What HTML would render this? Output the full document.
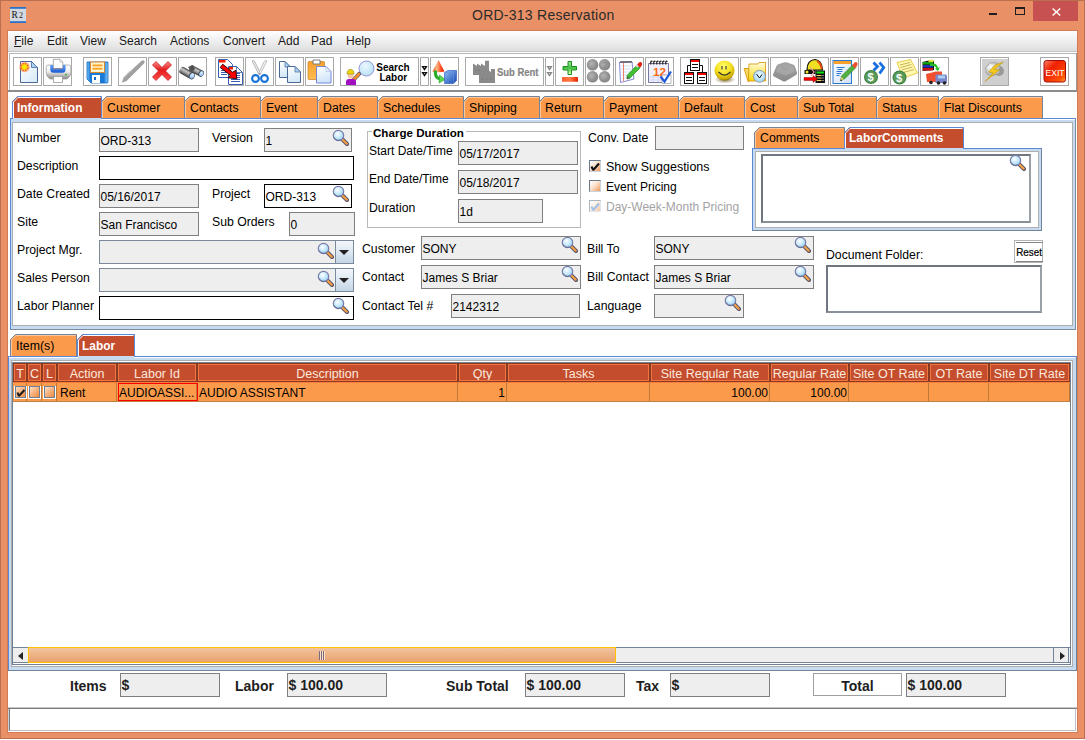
<!DOCTYPE html>
<html><head><meta charset="utf-8"><style>
*{margin:0;padding:0;box-sizing:border-box}
html,body{width:1085px;height:740px;overflow:hidden;background:#fff;font-family:"Liberation Sans",sans-serif;font-size:12px;color:#000}
.a{position:absolute}
.t{position:absolute;white-space:nowrap;line-height:14px;font-size:12.25px}
.b{font-weight:bold}
.fld{position:absolute;height:24px;border:1px solid #7f7f7f;background:#eeeeee;white-space:nowrap;padding-left:0.5px;line-height:14px;padding-top:5px;overflow:hidden}
.fw{background:#fff;border-color:#000}
.tab{position:absolute;border:1px solid #7F9BC8;border-bottom:none;padding-left:5px;white-space:nowrap;background:#FA9A4A;font-size:12.5px;line-height:14px}
.tab.sel{background:#C44D2E;color:#fff;font-weight:bold}
.tb{position:absolute;top:57px;height:29px;border:1px solid #a9a9a9;background:#fff;overflow:hidden}
.th{position:absolute;top:363px;height:19px;background:#C44D2E;border:1px solid #F2743F;color:#fbe9dc;text-align:center;line-height:16px;font-size:12.5px;white-space:nowrap;overflow:hidden}
.td{position:absolute;background:#FA9A4A;border-right:1px solid #C07838;white-space:nowrap;overflow:hidden}
.cb{position:absolute;width:12px;height:12px;border:1px solid #6a7a8c;border-right-color:#c9d3dd;border-bottom-color:#c9d3dd;background:linear-gradient(135deg,#fff 0%,#fbe3d0 45%,#ee9a5e 100%)}
</style></head><body>
<div class="a" style="left:0px;top:0px;width:1085px;height:739px;background:#E99066;border:1px solid #B8704F"></div>
<svg class="a" style="left:10px;top:7px" width="16" height="16"><rect width="16" height="16" fill="#d4d8e0"/><rect width="16" height="1.8" fill="#2a72c8"/><rect y="14.2" width="16" height="1.8" fill="#2a72c8"/><text x="1.6" y="11.2" font-family="Liberation Serif" font-size="9.5" fill="#111">R</text><text x="9" y="11" font-family="Liberation Serif" font-size="8" fill="#222">2</text></svg>
<div class="t" style="left:472px;top:7.4px;font-size:14px;letter-spacing:0.25px;color:#2b2b2b;line-height:17px">ORD-313 Reservation</div>
<div class="a" style="left:989px;top:13px;width:8px;height:2px;background:#1e1e1e"></div>
<div class="a" style="left:1015px;top:7px;width:10px;height:8px;border:1px solid #1e1e1e;border-top-width:2px"></div>
<div class="a" style="left:1033px;top:1px;width:45px;height:20px;background:#C75050"></div>
<svg class="a" style="left:1052px;top:7.5px" width="9" height="8"><path d="M0.6 0.6L8.2 7.4M8.2 0.6L0.6 7.4" stroke="#fff" stroke-width="1.4"/></svg>
<div class="a" style="left:7px;top:30px;width:1071px;height:703px;background:#fff;border:1px solid #D27C57"></div>
<div class="a" style="left:8px;top:31px;width:1069px;height:20px;background:linear-gradient(#ffffff,#dedede)"></div>
<div class="a" style="left:8px;top:51px;width:1069px;height:1px;background:#c4c4c4"></div>
<div class="t" style="left:14px;top:34px;color:#1a1a1a;font-size:12px"><u>F</u>ile</div>
<div class="t" style="left:47px;top:34px;color:#1a1a1a;font-size:12px">Edit</div>
<div class="t" style="left:80px;top:34px;color:#1a1a1a;font-size:12px">View</div>
<div class="t" style="left:119px;top:34px;color:#1a1a1a;font-size:12px">Search</div>
<div class="t" style="left:170px;top:34px;color:#1a1a1a;font-size:12px">Actions</div>
<div class="t" style="left:223px;top:34px;color:#1a1a1a;font-size:12px">Convert</div>
<div class="t" style="left:278px;top:34px;color:#1a1a1a;font-size:12px">Add</div>
<div class="t" style="left:311px;top:34px;color:#1a1a1a;font-size:12px">Pad</div>
<div class="t" style="left:346px;top:34px;color:#1a1a1a;font-size:12px">Help</div>
<div class="a" style="left:9px;top:53px;width:1068px;height:38px;border-top:1px solid #b8b8b8;border-left:1px solid #b8b8b8;background:#fff"></div>
<div class="a" style="left:8px;top:90px;width:1069px;height:2px;background:#8c8c8c"></div>
<div class="a" style="left:1076px;top:53px;width:1px;height:38px;background:#9a9a9a"></div>
<div class="tb" style="left:13px;width:29px;"></div>
<svg class="a" style="left:13px;top:57px" width="29" height="29" viewBox="0 0 29 29"><defs><linearGradient id="pg1" x1="0" y1="0" x2="1" y2="1"><stop offset="0" stop-color="#fff"/><stop offset="1" stop-color="#d6e9f8"/></linearGradient>
<radialGradient id="sun1"><stop offset="0" stop-color="#f04020"/><stop offset="0.6" stop-color="#f85030"/><stop offset="1" stop-color="#ff8060" stop-opacity="0"/></radialGradient></defs>
<path d="M7.5 4.5H18.5L24.5 10.5V25.5H7.5Z" fill="url(#pg1)" stroke="#4b6896" stroke-width="1"/>
<path d="M18.5 4.5V10.5H24.5Z" fill="#a8d4f4" stroke="#4b6896" stroke-width="0.8"/>
<circle cx="11.5" cy="10" r="5.8" fill="url(#sun1)"/>
<path d="M16.70 10.00L13.90 10.99L15.18 13.68L12.49 12.40L11.50 15.20L10.51 12.40L7.82 13.68L9.10 10.99L6.30 10.00L9.10 9.01L7.82 6.32L10.51 7.60L11.50 4.80L12.49 7.60L15.18 6.32L13.90 9.01Z" fill="#ffd020" opacity="0.9"/>
<circle cx="11.5" cy="10" r="2.2" fill="#ffe800"/></svg>
<div class="tb" style="left:43px;width:29px;"></div>
<svg class="a" style="left:43px;top:57px" width="29" height="29" viewBox="0 0 29 29"><defs><linearGradient id="pr1" x1="0" y1="0" x2="0" y2="1"><stop offset="0" stop-color="#ffffff"/><stop offset="0.45" stop-color="#f0f0f0"/><stop offset="1" stop-color="#8a8a8a"/></linearGradient><linearGradient id="pr2" x1="0" y1="0" x2="0" y2="1"><stop offset="0" stop-color="#5aa0ff"/><stop offset="1" stop-color="#1a5ad0"/></linearGradient></defs>
<path d="M3.2 10Q3.2 8 5.2 8H25.8Q27.8 8 27.8 10V15.5Q27.8 19.5 24 22H7Q3.2 19.5 3.2 15.5Z" fill="url(#pr1)" stroke="#9a9a9a" stroke-width="0.7"/>
<path d="M7.3 8H22.5V12.5Q22.5 15.8 19.5 15.8H10.3Q7.3 15.8 7.3 12.5Z" fill="url(#pr2)"/>
<path d="M10.3 2.3H17L19.8 5.1V11.5H10.3Z" fill="#fff" stroke="#9a9a9a" stroke-width="0.8"/>
<path d="M17 2.3V5.1H19.8" fill="none" stroke="#b0b0b0" stroke-width="0.6"/>
<rect x="10" y="11" width="10" height="1.3" fill="#8a8aa8"/>
<rect x="10.4" y="19.4" width="9.2" height="6" fill="#fff" stroke="#9a9a9a" stroke-width="0.8"/>
<circle cx="23" cy="17.6" r="0.9" fill="#20b020"/></svg>
<div class="tb" style="left:83px;width:29px;"></div>
<svg class="a" style="left:83px;top:57px" width="29" height="29" viewBox="0 0 29 29"><defs><linearGradient id="fl1" x1="0" y1="0" x2="1" y2="0"><stop offset="0" stop-color="#7cc8f8"/><stop offset="0.15" stop-color="#1a7ad8"/><stop offset="0.8" stop-color="#1a7ad8"/><stop offset="1" stop-color="#8ad0fa"/></linearGradient></defs>
<path d="M4 5H25V25Q25 26 24 26H8L4 22Z" fill="url(#fl1)" stroke="#1466c0" stroke-width="0.8"/>
<rect x="7.5" y="5" width="14" height="10.5" fill="#fff4d0" stroke="#d88a30" stroke-width="1"/>
<rect x="9.5" y="7.5" width="10" height="1.8" fill="#f8a020"/>
<rect x="9.5" y="10.8" width="10" height="1.8" fill="#f8a020"/>
<rect x="9" y="18" width="8" height="8" fill="#fff"/>
<rect x="11" y="20" width="2" height="3" fill="#1a6ad0"/></svg>
<div class="tb" style="left:118px;width:29px;"></div>
<svg class="a" style="left:118px;top:57px" width="29" height="29" viewBox="0 0 29 29"><defs><linearGradient id="pn1" x1="0" y1="0" x2="1" y2="1"><stop offset="0" stop-color="#c8c8c8"/><stop offset="0.5" stop-color="#a0a0a0"/><stop offset="1" stop-color="#808080"/></linearGradient><linearGradient id="pns" x1="0" y1="0" x2="1" y2="0"><stop offset="0" stop-color="#fff" stop-opacity="0"/><stop offset="1" stop-color="#d8d8d8"/></linearGradient></defs>
<path d="M3.5 25L6 17L13 12L9 20Z" fill="url(#pns)" opacity="0.8"/>
<path d="M3.8 25.8L5.5 20.5L23.5 3.8Q25.5 2.5 26.5 4Q27 5.5 25.5 7L8.5 24Z" fill="url(#pn1)"/></svg>
<div class="tb" style="left:148px;width:29px;"></div>
<svg class="a" style="left:148px;top:57px" width="29" height="29" viewBox="0 0 29 29"><defs><linearGradient id="x1" x1="0" y1="0" x2="0" y2="1"><stop offset="0" stop-color="#f88"/><stop offset="0.45" stop-color="#e41c1c"/><stop offset="1" stop-color="#ff5050"/></linearGradient></defs>
<path d="M4.5 8L8 4.5L14 10.5L20 4.5L23.5 8L17.5 14L23.5 20L20 23.5L14 17.5L8 23.5L4.5 20L10.5 14Z" fill="url(#x1)" stroke="#c01010" stroke-width="0.7" stroke-linejoin="round"/></svg>
<div class="tb" style="left:178px;width:29px;"></div>
<svg class="a" style="left:178px;top:57px" width="29" height="29" viewBox="0 0 29 29"><defs><linearGradient id="bn1" x1="0" y1="0" x2="0" y2="1"><stop offset="0" stop-color="#404040"/><stop offset="0.35" stop-color="#c8c8c8"/><stop offset="0.6" stop-color="#9a9a9a"/><stop offset="1" stop-color="#3a3a3a"/></linearGradient><radialGradient id="ln1" cx="0.45" cy="0.35" r="0.7"><stop offset="0" stop-color="#e4f2ff"/><stop offset="1" stop-color="#7ab0f0"/></radialGradient></defs>
<g transform="translate(13 11.2) rotate(28)"><rect x="-1.5" y="-3.3" width="13" height="6.6" rx="2.5" fill="url(#bn1)"/><ellipse cx="11.5" cy="0" rx="2.6" ry="3.4" fill="#3a3a3a"/><ellipse cx="11.7" cy="0" rx="2" ry="2.7" fill="url(#ln1)"/></g>
<path d="M10 10L15 8L17 12L14 15Z" fill="#505050"/>
<g transform="translate(3.5 12.8) rotate(30)"><rect x="-1.5" y="-3.6" width="13.5" height="7.2" rx="2.5" fill="url(#bn1)"/><ellipse cx="12" cy="0" rx="2.9" ry="3.7" fill="#3a3a3a"/><ellipse cx="12.2" cy="0" rx="2.3" ry="3" fill="url(#ln1)"/></g></svg>
<div class="tb" style="left:215px;width:29px;"></div>
<svg class="a" style="left:215px;top:57px" width="29" height="29" viewBox="0 0 29 29"><path d="M3.5 2.5H12.5L17.5 7.5V20.5H3.5Z" fill="#fff" stroke="#3a5eb0" stroke-width="1"/>
<rect x="4" y="3" width="6.5" height="2.5" fill="#ff2000"/>
<path d="M6 13.5H13M6 15.5H13M6 17.5H12" stroke="#3a5eb0" stroke-width="1"/>
<path d="M13.5 9.5H21.5L27.5 15.5V27.5H13.5Z" fill="#fff" stroke="#3a5eb0" stroke-width="1"/>
<path d="M21.5 9.5V15.5H27.5" fill="none" stroke="#3a5eb0" stroke-width="0.8"/>
<rect x="14" y="10" width="4" height="2.5" fill="#ff2000"/>
<path d="M17 16.5H25M17 18.5H25M17 20.5H25M16 22.5H25M16 24.5H25" stroke="#3a5eb0" stroke-width="1"/>
<path d="M7.7 7.2L17.6 15.2L20.8 13.3L21.8 21.8L13.2 20.8L15.3 18.2L5.2 10.5Z" fill="#ff0000" stroke="#200000" stroke-width="0.9" stroke-linejoin="round"/></svg>
<div class="tb" style="left:245px;width:29px;"></div>
<svg class="a" style="left:245px;top:57px" width="29" height="29" viewBox="0 0 29 29"><path d="M7.5 3.5Q9 3 10 5L15.5 16.5L14 17.5L7.5 5Z" fill="#e8e8e8" stroke="#a0a0a0" stroke-width="0.7"/>
<path d="M21.5 3.5Q20 3 19 5L13.5 16.5L15 17.5L21.5 5Z" fill="#f4f4f4" stroke="#a8a8a8" stroke-width="0.7"/>
<circle cx="10.5" cy="21.5" r="3.4" fill="none" stroke="#1a74d8" stroke-width="2.1"/>
<circle cx="19.5" cy="21.5" r="3.4" fill="none" stroke="#1a74d8" stroke-width="2.1"/>
<circle cx="14.5" cy="17" r="0.8" fill="#888"/></svg>
<div class="tb" style="left:275px;width:29px;"></div>
<svg class="a" style="left:275px;top:57px" width="29" height="29" viewBox="0 0 29 29"><defs><linearGradient id="cp1" x1="0" y1="0" x2="0.3" y2="1"><stop offset="0" stop-color="#fff"/><stop offset="1" stop-color="#d4e8f8"/></linearGradient></defs><path d="M4.5 4.5H10L15.5 10V20.5H4.5Z" fill="url(#cp1)" stroke="#4b6896" stroke-width="1"/><path d="M10 4.5V10H15.5Z" fill="#a8d4f4" stroke="#4b6896" stroke-width="0.7"/><path d="M12.5 9.5H20L25.5 15V25.5H12.5Z" fill="url(#cp1)" stroke="#4b6896" stroke-width="1"/><path d="M20 9.5V15H25.5Z" fill="#a8d4f4" stroke="#4b6896" stroke-width="0.7"/></svg>
<div class="tb" style="left:305px;width:29px;"></div>
<svg class="a" style="left:305px;top:57px" width="29" height="29" viewBox="0 0 29 29"><defs><linearGradient id="cl1" x1="0" y1="0" x2="0" y2="1"><stop offset="0" stop-color="#f8a030"/><stop offset="1" stop-color="#ffbc50"/></linearGradient><linearGradient id="cp2" x1="0" y1="0" x2="0.3" y2="1"><stop offset="0" stop-color="#fff"/><stop offset="1" stop-color="#d0e6fa"/></linearGradient></defs>
<rect x="3" y="4.5" width="16.5" height="18" rx="1" fill="url(#cl1)" stroke="#c88020" stroke-width="0.7"/>
<path d="M8 3H15V7H8Z" fill="#fff" stroke="#707070" stroke-width="0.9"/>
<path d="M11.5 9.5H21L26 14.5V26H11.5Z" fill="url(#cp2)" stroke="#6a7ad8" stroke-width="0.9"/>
<path d="M21 9.5V14.5H26" fill="none" stroke="#b0c0e0" stroke-width="0.7"/></svg>
<div class="tb" style="left:340px;width:79px;"></div>
<svg class="a" style="left:340px;top:57px" width="79" height="29" viewBox="0 0 79 29"><defs><radialGradient id="sl1" cx="0.4" cy="0.35" r="0.7"><stop offset="0" stop-color="#eaf8ff"/><stop offset="1" stop-color="#b6e0f4"/></radialGradient></defs>
<path d="M19.5 16.5L12.5 24" stroke="#505060" stroke-width="4" stroke-linecap="round"/>
<path d="M19 17L13 23.5" stroke="#f09030" stroke-width="2.6" stroke-linecap="round"/>
<circle cx="26.5" cy="11.5" r="7.5" fill="url(#sl1)" stroke="#8a88d0" stroke-width="0.9"/>
<path d="M6 28V25Q6 22 9 22H13Q16 22 16 25V28Z" fill="#a010c0"/>
<circle cx="10.5" cy="18.5" r="3" fill="#f8c8a0"/>
<path d="M7 17Q7 12.5 10.5 12.5Q14 12.5 14 17Z" fill="#f0d800" stroke="#807000" stroke-width="0.5"/></svg>
<div class="tb" style="left:420px;width:9px;"></div>
<svg class="a" style="left:420px;top:57px" width="9" height="29" viewBox="0 0 9 29"><path d="M1.3 9H7.7L4.5 13.8Z" fill="#111"/><path d="M1.3 15H7.7L4.5 19.8Z" fill="#111"/><rect x="4" y="10" width="1" height="0.8" fill="#fff" opacity="0.8"/><rect x="4" y="16" width="1" height="0.8" fill="#fff" opacity="0.8"/></svg>
<div class="tb" style="left:430px;width:29px;"></div>
<svg class="a" style="left:430px;top:57px" width="29" height="29" viewBox="0 0 29 29"><defs><linearGradient id="cn1" x1="0" y1="0" x2="1" y2="0"><stop offset="0" stop-color="#ff4a10"/><stop offset="0.35" stop-color="#ffb888"/><stop offset="0.7" stop-color="#ff5020"/><stop offset="1" stop-color="#e01800"/></linearGradient><linearGradient id="cb1" x1="0" y1="0" x2="1" y2="1"><stop offset="0" stop-color="#90c0f8"/><stop offset="1" stop-color="#1848b0"/></linearGradient></defs>
<path d="M8.5 3L14.5 14.5Q8.5 16 2.5 14.5Z" fill="url(#cn1)"/>
<path d="M5.5 13.5Q4.5 21 10 22" stroke="#2cae2c" stroke-width="3.2" fill="none"/><path d="M9.5 18L15 22.5L9 26Z" fill="#5cd850" stroke="#20a020" stroke-width="0.6"/>
<path d="M14.5 15.5L18 13.5H26.5V23.5L23.5 26.5H14.5Z" fill="url(#cb1)" stroke="#2050b8" stroke-width="0.6"/>
<path d="M14.5 15.5H23.5V26.5M23.5 15.5L26.5 13.5" stroke="#6890d8" stroke-width="0.6" fill="none"/></svg>
<div class="tb" style="left:465px;width:79px;"></div>
<svg class="a" style="left:465px;top:57px" width="79" height="29" viewBox="0 0 79 29"><g fill="#8a8a8a"><path d="M8 18V6.5L12 9V6.5L16 9V6.5L20 9V3.7H24V18Z"/><path d="M14 26V12.5L18 15V12.5L22 15V12.5L26 15V12H30V26Z"/></g>
<g fill="#767676"><rect x="10" y="12.5" width="1.2" height="1.2"/><rect x="13.5" y="12.5" width="1.2" height="1.2"/><rect x="17" y="21.5" width="1.2" height="1.2"/><rect x="21" y="21.5" width="1.2" height="1.2"/><rect x="25" y="21.5" width="1.2" height="1.2"/></g>
<text x="32" y="18.7" font-family="Liberation Sans" font-weight="bold" font-size="10.3" fill="#858585" stroke="#858585" stroke-width="0.2" textLength="41.5" lengthAdjust="spacingAndGlyphs">Sub Rent</text></svg>
<div class="tb" style="left:545px;width:9px;"></div>
<svg class="a" style="left:545px;top:57px" width="9" height="29" viewBox="0 0 9 29"><path d="M1.3 9H7.7L4.5 13.8Z" fill="#888"/><path d="M1.3 15H7.7L4.5 19.8Z" fill="#888"/><rect x="4" y="10" width="1" height="0.8" fill="#fff" opacity="0.8"/><rect x="4" y="16" width="1" height="0.8" fill="#fff" opacity="0.8"/></svg>
<div class="tb" style="left:555px;width:29px;"></div>
<svg class="a" style="left:555px;top:57px" width="29" height="29" viewBox="0 0 29 29"><defs><linearGradient id="pl1" x1="0" y1="0" x2="0" y2="1"><stop offset="0" stop-color="#a8e8a8"/><stop offset="0.5" stop-color="#40c040"/><stop offset="1" stop-color="#f0ffc0"/></linearGradient><linearGradient id="mn1" x1="0" y1="0" x2="1" y2="0"><stop offset="0" stop-color="#ff6030"/><stop offset="0.5" stop-color="#ff7a40"/><stop offset="1" stop-color="#e82000"/></linearGradient></defs>
<path d="M13 4.5H16.5V9.5H21.5V13H16.5V17.5H13V13H8V9.5H13Z" fill="url(#pl1)" stroke="#1a901a" stroke-width="1"/>
<rect x="7" y="20" width="16" height="4.8" fill="url(#mn1)" rx="0.5"/></svg>
<div class="tb" style="left:585px;width:29px;"></div>
<svg class="a" style="left:585px;top:57px" width="29" height="29" viewBox="0 0 29 29"><defs><radialGradient id="gc1" cx="0.4" cy="0.4"><stop offset="0" stop-color="#b4b4b4"/><stop offset="1" stop-color="#8a8a8a"/></radialGradient></defs>
<circle cx="7.5" cy="7.8" r="5.8" fill="url(#gc1)"/><circle cx="19.6" cy="7.8" r="5.8" fill="url(#gc1)"/>
<circle cx="7.5" cy="19.8" r="5.8" fill="url(#gc1)"/><circle cx="19.6" cy="19.8" r="5.8" fill="url(#gc1)"/>
<text x="17.3" y="11" font-family="Liberation Sans" font-size="9" fill="#808080">?</text></svg>
<div class="tb" style="left:615px;width:29px;"></div>
<svg class="a" style="left:615px;top:57px" width="29" height="29" viewBox="0 0 29 29"><path d="M4.5 5.5L17 5L19 22L5.5 25.5Z" fill="#fff" stroke="#7a7ad0" stroke-width="0.9"/>
<path d="M6 9H16M6.2 12H16.5M6.4 15H17M6.6 18H17.2M6.8 21H17.4" stroke="#bcd8f8" stroke-width="0.8"/>
<path d="M8.5 6V24" stroke="#f06040" stroke-width="0.8"/>
<path d="M5 5.5Q6 3 7 5.5Q8 3 9 5.5Q10 3 11 5.5Q12 3 13 5.5Q14 3 15 5.5Q16 3 17 5.5" stroke="#222" stroke-width="0.9" fill="none"/>
<path d="M12 18.5L22 8L25 11L14.5 21.5L12 22Z" fill="#40c030" stroke="#208020" stroke-width="0.6"/>
<path d="M12 22L12.5 19L14.5 21Z" fill="#555"/>
<path d="M21.5 8.5L23.5 6Q25.5 4 27 6Q27.5 8 25.5 10.5Z" fill="#e02010"/>
<rect x="20.5" y="8" width="3" height="2" transform="rotate(45 22 9)" fill="#ddd"/></svg>
<div class="tb" style="left:645px;width:29px;"></div>
<svg class="a" style="left:645px;top:57px" width="29" height="29" viewBox="0 0 29 29"><path d="M3.5 6.5H23.5V25.5H3.5Z" fill="#f0f0ff" stroke="#6a6a90" stroke-width="0.9"/>
<path d="M4 20H23M4 23H23M8 18V25M13 18V25M18 18V25" stroke="#c8d0f0" stroke-width="0.7"/>
<path d="M6 7.5Q5 3 7.5 4.5M9 7.5Q8 3 10.5 4.5M12 7.5Q11 3 13.5 4.5M15 7.5Q14 3 16.5 4.5M18 7.5Q17 3 19.5 4.5M21 7.5Q20 3 22.5 4.5" stroke="#1a1a1a" stroke-width="1.2" fill="none"/>
<text x="8" y="18.5" font-family="Liberation Sans" font-weight="bold" font-size="10.5" fill="#ff6a10" textLength="13" lengthAdjust="spacingAndGlyphs">12</text>
<rect x="17" y="18" width="9" height="8.5" fill="#fff" stroke="#8a8a8a" stroke-width="0.6"/>
<path d="M15.5 19.5L19.5 24.5L26 14.5" stroke="#1a5ad8" stroke-width="2.2" fill="none"/></svg>
<div class="tb" style="left:680px;width:29px;"></div>
<svg class="a" style="left:680px;top:57px" width="29" height="29" viewBox="0 0 29 29"><path d="M7.5 15V8.5H22.5V15" stroke="#111" stroke-width="1" fill="none"/><rect x="10.5" y="2.5" width="9" height="11" fill="#fff" stroke="#111" stroke-width="1"/><rect x="11" y="3" width="8" height="2" fill="#f00"/><path d="M12 7.5H18M12 10.5H18" stroke="#111" stroke-width="1"/><rect x="4.5" y="15.5" width="9" height="11" fill="#fff" stroke="#111" stroke-width="1"/><rect x="5" y="16" width="8" height="2" fill="#f00"/><path d="M6 20.5H12M6 23.5H12" stroke="#111" stroke-width="1"/><rect x="17.5" y="15.5" width="9" height="11" fill="#fff" stroke="#111" stroke-width="1"/><rect x="18" y="16" width="8" height="2" fill="#f00"/><path d="M19 20.5H25M19 23.5H25" stroke="#111" stroke-width="1"/></svg>
<div class="tb" style="left:710px;width:29px;"></div>
<svg class="a" style="left:710px;top:57px" width="29" height="29" viewBox="0 0 29 29"><defs><radialGradient id="sm1" cx="0.45" cy="0.3" r="0.7"><stop offset="0" stop-color="#ffff70"/><stop offset="0.55" stop-color="#f4e020"/><stop offset="0.9" stop-color="#c8a800"/><stop offset="1" stop-color="#8a7000"/></radialGradient><radialGradient id="sh1"><stop offset="0" stop-color="#604800" stop-opacity="0.8"/><stop offset="1" stop-color="#604800" stop-opacity="0"/></radialGradient></defs>
<ellipse cx="15" cy="22.5" rx="10.5" ry="4" fill="url(#sh1)"/>
<circle cx="14.5" cy="13.5" r="10" fill="url(#sm1)"/>
<path d="M12 9V12.5M16 9V12.5" stroke="#333" stroke-width="1.1"/>
<path d="M8.5 15Q14.5 21 20.5 15" stroke="#333" stroke-width="1.2" fill="none"/></svg>
<div class="tb" style="left:740px;width:29px;"></div>
<svg class="a" style="left:740px;top:57px" width="29" height="29" viewBox="0 0 29 29"><defs><linearGradient id="fo1" x1="0" y1="0" x2="0" y2="1"><stop offset="0" stop-color="#fffce0"/><stop offset="1" stop-color="#f8d800"/></linearGradient><radialGradient id="ck1" cx="0.5" cy="0.4"><stop offset="0" stop-color="#f0ffff"/><stop offset="1" stop-color="#a8d8f8"/></radialGradient></defs>
<path d="M4 11.5H9.5L9 24.5H8Z" fill="#f8d860" stroke="#d89000" stroke-width="0.8"/>
<path d="M9 7H18L19 5.5H25.5V24H8.5Z" fill="url(#fo1)" stroke="#d89000" stroke-width="0.8"/>
<circle cx="19.5" cy="19.3" r="6" fill="url(#ck1)" stroke="#8a8aa0" stroke-width="0.8"/>
<path d="M16.5 17L19.5 21L22 17.5" stroke="#111" stroke-width="1" fill="none"/></svg>
<div class="tb" style="left:770px;width:29px;"></div>
<svg class="a" style="left:770px;top:57px" width="29" height="29" viewBox="0 0 29 29"><defs><linearGradient id="ky1" x1="0" y1="0" x2="0" y2="1"><stop offset="0" stop-color="#a4a4a4"/><stop offset="1" stop-color="#8a8a8a"/></linearGradient></defs>
<path d="M3 17.5L6.5 9Q7 7.5 9 7L14.5 5.3Q15.5 5 16.5 5.3L23 7.5Q24.5 8 25 9.5L27 15.5Q27.5 17 26 18L16 24Q14.5 25 13 24.3L4 19.5Q2.5 18.5 3 17.5Z" fill="url(#ky1)"/>
<path d="M7.5 10.5L15 6.8L23.5 9.5L24.8 14.8L15.5 18.5L6 14.8Z" fill="#a6a6a6"/>
<path d="M12 9.5L15 13L18 10" stroke="#969696" stroke-width="0.9" fill="none"/></svg>
<div class="tb" style="left:800px;width:29px;"></div>
<svg class="a" style="left:800px;top:57px" width="29" height="29" viewBox="0 0 29 29"><path d="M7 13Q7 3 15 2.5Q22 3 22.5 13Z" fill="#f0e020" stroke="#111" stroke-width="1.2"/>
<path d="M17 4Q21 6 21.5 12" stroke="#e05010" stroke-width="2" fill="none"/>
<path d="M4.5 13H15.5V17H4.5Z" fill="#111"/><circle cx="7" cy="15" r="1.5" fill="#f0e020"/>
<path d="M10 10L14 15L11 19" stroke="#f0a0a0" stroke-width="1.2" fill="none"/>
<rect x="15.5" y="13.5" width="9.5" height="12.5" fill="#111"/>
<rect x="16.5" y="14.5" width="7.5" height="2" fill="#10e010"/>
<path d="M16.5 18.5H21.5M16.5 21H21.5M16.5 23.5H21.5" stroke="#f0d060" stroke-width="1.2"/>
<path d="M22.5 18.5H23.5M22.5 21H23.5M22.5 23.5H23.5" stroke="#eee" stroke-width="1"/>
<path d="M4 20.5H13V18.5L17.5 22L13 25.5V23.5H4Z" fill="#f00" stroke="#600" stroke-width="0.4"/></svg>
<div class="tb" style="left:830px;width:29px;"></div>
<svg class="a" style="left:830px;top:57px" width="29" height="29" viewBox="0 0 29 29"><defs><linearGradient id="dp1" x1="0" y1="0" x2="1" y2="1"><stop offset="0" stop-color="#fff"/><stop offset="1" stop-color="#d0e0f8"/></linearGradient></defs>
<rect x="3" y="3.5" width="18.5" height="23" fill="url(#dp1)" stroke="#2a78d0" stroke-width="1"/>
<rect x="3.5" y="4" width="17.5" height="3" fill="#f8a030"/>
<path d="M6.5 10.5H14.5M7.5 12.5H12.5M6.5 14.5H12.5M6.5 16.5H11M6.5 18.5H9.5" stroke="#2a78d0" stroke-width="1"/>
<path d="M10.5 23.5L11.5 19L23 7.5L26 10.5L14.5 22Z" fill="#50b040" stroke="#2a7a2a" stroke-width="0.6"/>
<path d="M10.5 23.5L11.3 20L14 22.3Z" fill="#f0d080"/><path d="M10.3 24.2L11 22.5L12.2 23.4Z" fill="#111"/>
<path d="M22 8.5L24.5 5.5Q26 4.5 27.5 6Q28 8 26.5 9.5L25 11.5Z" fill="#f05030"/></svg>
<div class="tb" style="left:860px;width:29px;"></div>
<svg class="a" style="left:860px;top:57px" width="29" height="29" viewBox="0 0 29 29"><path d="M12.5 6.5L14.5 4.5L19.5 9.5L14.5 14.5L12.5 12.5L15.5 9.5Z" fill="#1a70e0"/><path d="M18.5 6.5L20.5 4.5L25.5 10.5L20.5 17.5L18.5 15.5L22 10.5Z" fill="#1a70e0"/><circle cx="11" cy="20" r="7" fill="#3a8040"/><circle cx="11" cy="20" r="6" fill="#5a9a5a"/><text x="7.6" y="24" font-family="Liberation Sans" font-weight="bold" font-size="11" fill="#fff">$</text></svg>
<div class="tb" style="left:890px;width:29px;"></div>
<svg class="a" style="left:890px;top:57px" width="29" height="29" viewBox="0 0 29 29"><path d="M7 5.5L20.5 2.5L27.5 16L13 21Z" fill="#fffab0" stroke="#e8c020" stroke-width="0.8"/>
<path d="M10 8L20 5.5M10.5 10.5L21.5 7.5M11.5 13L22.5 10M13 15.5L24 12.5" stroke="#c8a850" stroke-width="0.9"/><circle cx="9.5" cy="20.5" r="7" fill="#3a8040"/><circle cx="9.5" cy="20.5" r="6" fill="#5a9a5a"/><text x="6.1" y="24.5" font-family="Liberation Sans" font-weight="bold" font-size="11" fill="#fff">$</text></svg>
<div class="tb" style="left:920px;width:29px;"></div>
<svg class="a" style="left:920px;top:57px" width="29" height="29" viewBox="0 0 29 29"><path d="M2.5 5L11 3L14 4L14 13L2.5 14Z" fill="#111"/>
<rect x="3" y="5" width="10" height="2.5" fill="#10a010"/><rect x="3" y="8" width="10" height="2.5" fill="#2030c0"/><rect x="3" y="11" width="10" height="2.5" fill="#d01010"/>
<ellipse cx="11" cy="4" rx="3" ry="1.3" fill="#e0e040"/>
<path d="M10 7Q17 5 18 11L20 10L18 14L14.5 11.5L16.5 11.5Q15 8 10 9Z" fill="#20c020"/>
<path d="M6 17L16 14.5H22V25H7Z" fill="#f05030"/>
<path d="M15.5 17.5H26Q27 18 27 20V26H15.5Z" fill="#7a84c8"/>
<rect x="18" y="18.5" width="7" height="3" fill="#a8d0f0"/>
<circle cx="11" cy="25.5" r="1.8" fill="#222"/><circle cx="18.5" cy="26" r="1.8" fill="#222"/><circle cx="24.5" cy="26" r="1.8" fill="#222"/></svg>
<div class="tb" style="left:980px;width:29px;background:#cfcfcf;box-shadow:inset 1px 1px 0 #fff;"></div>
<svg class="a" style="left:980px;top:57px" width="29" height="29" viewBox="0 0 29 29"><defs><radialGradient id="cd1" cx="0.35" cy="0.35"><stop offset="0" stop-color="#fff"/><stop offset="1" stop-color="#c0c0c0"/></radialGradient></defs>
<circle cx="19" cy="14" r="5" fill="#9a9a9a"/>
<path d="M6 14Q4.5 10 8 8.5Q9 5 13 6Q16 4.5 18 7Q21 8 19.5 12Q21 16 17 17.5Q13 19 9.5 18Q5.5 17.5 6 14Z" fill="url(#cd1)" stroke="#888" stroke-width="0.6"/>
<path d="M23.5 5L14.5 12L19.5 13L5 24.5L13 16L8.5 15L15 8Z" fill="#f4c820" stroke="#b08a00" stroke-width="0.5"/></svg>
<div class="tb" style="left:1040px;width:29px;"></div>
<svg class="a" style="left:1040px;top:57px" width="29" height="29" viewBox="0 0 29 29"><defs><linearGradient id="ex1" x1="0" y1="0" x2="1" y2="1"><stop offset="0" stop-color="#ff8060"/><stop offset="0.35" stop-color="#f02000"/><stop offset="0.8" stop-color="#ff5000"/><stop offset="1" stop-color="#ffa040"/></linearGradient></defs>
<rect x="4" y="3.5" width="21.5" height="21.5" rx="2.5" fill="url(#ex1)" stroke="#a01010" stroke-width="1"/>
<text x="5.5" y="18.7" font-family="Liberation Sans" font-size="9.6" fill="#fff" textLength="19" lengthAdjust="spacingAndGlyphs">EXIT</text></svg>
<svg class="a" style="left:340px;top:57px" width="79" height="29"><text x="53" y="14.3" text-anchor="middle" font-family="Liberation Sans" font-weight="bold" font-size="10">Search</text><text x="53.3" y="23.6" text-anchor="middle" font-family="Liberation Sans" font-weight="bold" font-size="10">Labor</text></svg>
<div class="a" style="left:10px;top:118px;width:1066px;height:212px;border:1px solid #7D8C9C;border-left-color:#5B87D5;border-top-color:#5B87D5;background:#C6DAF0"></div>
<div class="a" style="left:101px;top:119px;width:974px;height:1px;background:#fff"></div>
<div class="a" style="left:12px;top:122px;width:1061px;height:204px;border:1px solid #ADADAD;background:#fff"></div>
<svg class="a" style="left:12px;top:96px" width="1032" height="22"><path d="M89.5 22V5.5L94.5 0.5H172.5V22" fill="#FA9A4A" stroke="#71849C"/><path d="M90.5 22V6L95 1.5H171.5" fill="none" stroke="#fde6d2" stroke-opacity="0.6"/><path d="M172.5 22V5.5L177.5 0.5H248.5V22" fill="#FA9A4A" stroke="#71849C"/><path d="M173.5 22V6L178 1.5H247.5" fill="none" stroke="#fde6d2" stroke-opacity="0.6"/><path d="M248.5 22V5.5L253.5 0.5H305.5V22" fill="#FA9A4A" stroke="#71849C"/><path d="M249.5 22V6L254 1.5H304.5" fill="none" stroke="#fde6d2" stroke-opacity="0.6"/><path d="M305.5 22V5.5L310.5 0.5H365.5V22" fill="#FA9A4A" stroke="#71849C"/><path d="M306.5 22V6L311 1.5H364.5" fill="none" stroke="#fde6d2" stroke-opacity="0.6"/><path d="M365.5 22V5.5L370.5 0.5H451.5V22" fill="#FA9A4A" stroke="#71849C"/><path d="M366.5 22V6L371 1.5H450.5" fill="none" stroke="#fde6d2" stroke-opacity="0.6"/><path d="M451.5 22V5.5L456.5 0.5H527.5V22" fill="#FA9A4A" stroke="#71849C"/><path d="M452.5 22V6L457 1.5H526.5" fill="none" stroke="#fde6d2" stroke-opacity="0.6"/><path d="M527.5 22V5.5L532.5 0.5H591.5V22" fill="#FA9A4A" stroke="#71849C"/><path d="M528.5 22V6L533 1.5H590.5" fill="none" stroke="#fde6d2" stroke-opacity="0.6"/><path d="M591.5 22V5.5L596.5 0.5H666.5V22" fill="#FA9A4A" stroke="#71849C"/><path d="M592.5 22V6L597 1.5H665.5" fill="none" stroke="#fde6d2" stroke-opacity="0.6"/><path d="M666.5 22V5.5L671.5 0.5H732.5V22" fill="#FA9A4A" stroke="#71849C"/><path d="M667.5 22V6L672 1.5H731.5" fill="none" stroke="#fde6d2" stroke-opacity="0.6"/><path d="M732.5 22V5.5L737.5 0.5H785.5V22" fill="#FA9A4A" stroke="#71849C"/><path d="M733.5 22V6L738 1.5H784.5" fill="none" stroke="#fde6d2" stroke-opacity="0.6"/><path d="M785.5 22V5.5L790.5 0.5H864.5V22" fill="#FA9A4A" stroke="#71849C"/><path d="M786.5 22V6L791 1.5H863.5" fill="none" stroke="#fde6d2" stroke-opacity="0.6"/><path d="M864.5 22V5.5L869.5 0.5H926.5V22" fill="#FA9A4A" stroke="#71849C"/><path d="M865.5 22V6L870 1.5H925.5" fill="none" stroke="#fde6d2" stroke-opacity="0.6"/><path d="M926.5 22V5.5L931.5 0.5H1030.5V22" fill="#FA9A4A" stroke="#71849C"/><path d="M927.5 22V6L932 1.5H1029.5" fill="none" stroke="#fde6d2" stroke-opacity="0.6"/><path d="M0.5 22V5.5L5.5 0.5H89.5V22" fill="#C44D2E" stroke="#5B87D5"/><path d="M1.5 22V6L6 1.5H88.5" fill="none" stroke="#fff"/></svg>
<div class="t" style="left:17px;top:101px;font-size:11.9px;color:#fff;font-weight:bold">Information</div>
<div class="t" style="left:107px;top:101px;font-size:12.3px">Customer</div>
<div class="t" style="left:190px;top:101px;font-size:12.3px">Contacts</div>
<div class="t" style="left:266px;top:101px;font-size:12.3px">Event</div>
<div class="t" style="left:323px;top:101px;font-size:12.3px">Dates</div>
<div class="t" style="left:383px;top:101px;font-size:12.3px">Schedules</div>
<div class="t" style="left:469px;top:101px;font-size:12.3px">Shipping</div>
<div class="t" style="left:545px;top:101px;font-size:12.3px">Return</div>
<div class="t" style="left:609px;top:101px;font-size:12.3px">Payment</div>
<div class="t" style="left:684px;top:101px;font-size:12.3px">Default</div>
<div class="t" style="left:750px;top:101px;font-size:12.3px">Cost</div>
<div class="t" style="left:803px;top:101px;font-size:12.3px">Sub Total</div>
<div class="t" style="left:882px;top:101px;font-size:12.3px">Status</div>
<div class="t" style="left:944px;top:101px;font-size:12.3px">Flat Discounts</div>
<div class="a" style="left:13px;top:118px;width:88px;height:1px;background:#C6DAF0"></div>
<div class="a" style="left:12px;top:118px;width:1px;height:1px;background:#5B87D5"></div>
<div class="t" style="left:17px;top:131px;">Number</div>
<div class="fld" style="left:99px;top:128px;width:100px;height:24px;">ORD-313</div>
<div class="t" style="left:212px;top:131px;">Version</div>
<div class="fld" style="left:264px;top:128px;width:88px;height:24px;">1</div>
<svg class="a" style="left:332px;top:129px" width="17" height="17" viewBox="0 0 17 17"><defs><radialGradient id="mg1" cx="0.4" cy="0.35" r="0.7"><stop offset="0" stop-color="#ffffff"/><stop offset="0.6" stop-color="#bfe6fb"/><stop offset="1" stop-color="#8fc7ea"/></radialGradient></defs><line x1="9.5" y1="9.5" x2="15" y2="15" stroke="#55526e" stroke-width="4" stroke-linecap="round"/><line x1="10" y1="10" x2="14.7" y2="14.7" stroke="#f6a040" stroke-width="2.2" stroke-linecap="round"/><circle cx="6.5" cy="6.5" r="5.2" fill="url(#mg1)" stroke="#7a7ca8" stroke-width="1.2"/><path d="M2.2 8.5A5 5 0 0 0 8.5 10.8" stroke="#606088" stroke-width="0.8" fill="none"/></svg>
<div class="t" style="left:17px;top:159px;">Description</div>
<div class="fld fw" style="left:99px;top:156px;width:255px;height:24px;"></div>
<div class="t" style="left:17px;top:187px;">Date Created</div>
<div class="fld" style="left:99px;top:184px;width:100px;height:24px;">05/16/2017</div>
<div class="t" style="left:212px;top:187px;">Project</div>
<div class="fld fw" style="left:264px;top:184px;width:88px;height:24px;">ORD-313</div>
<svg class="a" style="left:332px;top:185px" width="17" height="17" viewBox="0 0 17 17"><defs><radialGradient id="mg2" cx="0.4" cy="0.35" r="0.7"><stop offset="0" stop-color="#ffffff"/><stop offset="0.6" stop-color="#bfe6fb"/><stop offset="1" stop-color="#8fc7ea"/></radialGradient></defs><line x1="9.5" y1="9.5" x2="15" y2="15" stroke="#55526e" stroke-width="4" stroke-linecap="round"/><line x1="10" y1="10" x2="14.7" y2="14.7" stroke="#f6a040" stroke-width="2.2" stroke-linecap="round"/><circle cx="6.5" cy="6.5" r="5.2" fill="url(#mg2)" stroke="#7a7ca8" stroke-width="1.2"/><path d="M2.2 8.5A5 5 0 0 0 8.5 10.8" stroke="#606088" stroke-width="0.8" fill="none"/></svg>
<div class="t" style="left:17px;top:215px;">Site</div>
<div class="fld" style="left:99px;top:212px;width:100px;height:24px;">San Francisco</div>
<div class="t" style="left:212px;top:215px;">Sub Orders</div>
<div class="fld" style="left:289px;top:212px;width:66px;height:24px;">0</div>
<div class="t" style="left:17px;top:243px;">Project Mgr.</div>
<div class="t" style="left:17px;top:271px;">Sales Person</div>
<div class="a" style="left:99px;top:240px;width:255px;height:24px;border:1px solid #7A8A9A;background:#eeeeee"></div>
<div class="a" style="left:335px;top:241px;width:18px;height:22px;border-left:1px solid #7A8A9A;background:linear-gradient(#f4f8fc,#c5d6e6)"></div>
<svg class="a" style="left:339px;top:250px" width="10" height="5"><path d="M0 0H10L5 5Z" fill="#222"/></svg>
<svg class="a" style="left:317px;top:242px" width="17" height="17" viewBox="0 0 17 17"><defs><radialGradient id="mg3" cx="0.4" cy="0.35" r="0.7"><stop offset="0" stop-color="#ffffff"/><stop offset="0.6" stop-color="#bfe6fb"/><stop offset="1" stop-color="#8fc7ea"/></radialGradient></defs><line x1="9.5" y1="9.5" x2="15" y2="15" stroke="#55526e" stroke-width="4" stroke-linecap="round"/><line x1="10" y1="10" x2="14.7" y2="14.7" stroke="#f6a040" stroke-width="2.2" stroke-linecap="round"/><circle cx="6.5" cy="6.5" r="5.2" fill="url(#mg3)" stroke="#7a7ca8" stroke-width="1.2"/><path d="M2.2 8.5A5 5 0 0 0 8.5 10.8" stroke="#606088" stroke-width="0.8" fill="none"/></svg>
<div class="a" style="left:99px;top:268px;width:255px;height:24px;border:1px solid #7A8A9A;background:#eeeeee"></div>
<div class="a" style="left:335px;top:269px;width:18px;height:22px;border-left:1px solid #7A8A9A;background:linear-gradient(#f4f8fc,#c5d6e6)"></div>
<svg class="a" style="left:339px;top:278px" width="10" height="5"><path d="M0 0H10L5 5Z" fill="#222"/></svg>
<svg class="a" style="left:317px;top:270px" width="17" height="17" viewBox="0 0 17 17"><defs><radialGradient id="mg4" cx="0.4" cy="0.35" r="0.7"><stop offset="0" stop-color="#ffffff"/><stop offset="0.6" stop-color="#bfe6fb"/><stop offset="1" stop-color="#8fc7ea"/></radialGradient></defs><line x1="9.5" y1="9.5" x2="15" y2="15" stroke="#55526e" stroke-width="4" stroke-linecap="round"/><line x1="10" y1="10" x2="14.7" y2="14.7" stroke="#f6a040" stroke-width="2.2" stroke-linecap="round"/><circle cx="6.5" cy="6.5" r="5.2" fill="url(#mg4)" stroke="#7a7ca8" stroke-width="1.2"/><path d="M2.2 8.5A5 5 0 0 0 8.5 10.8" stroke="#606088" stroke-width="0.8" fill="none"/></svg>
<div class="t" style="left:17px;top:299px;">Labor Planner</div>
<div class="fld fw" style="left:99px;top:296px;width:255px;height:24px;"></div>
<svg class="a" style="left:332px;top:297px" width="17" height="17" viewBox="0 0 17 17"><defs><radialGradient id="mg5" cx="0.4" cy="0.35" r="0.7"><stop offset="0" stop-color="#ffffff"/><stop offset="0.6" stop-color="#bfe6fb"/><stop offset="1" stop-color="#8fc7ea"/></radialGradient></defs><line x1="9.5" y1="9.5" x2="15" y2="15" stroke="#55526e" stroke-width="4" stroke-linecap="round"/><line x1="10" y1="10" x2="14.7" y2="14.7" stroke="#f6a040" stroke-width="2.2" stroke-linecap="round"/><circle cx="6.5" cy="6.5" r="5.2" fill="url(#mg5)" stroke="#7a7ca8" stroke-width="1.2"/><path d="M2.2 8.5A5 5 0 0 0 8.5 10.8" stroke="#606088" stroke-width="0.8" fill="none"/></svg>
<div class="a" style="left:367px;top:131px;width:214px;height:97px;border:1px solid #b9b9b9"></div>
<div class="t" style="left:372px;top:126px;font-weight:bold;font-size:11.6px;background:#fff;padding:0 2px 0 1px">Charge Duration</div>
<div class="t" style="left:369px;top:144px;font-size:12px">Start Date/Time</div>
<div class="fld" style="left:458px;top:141px;width:120px;height:24px;">05/17/2017</div>
<div class="t" style="left:369px;top:172px;font-size:12px">End Date/Time</div>
<div class="fld" style="left:458px;top:170px;width:120px;height:24px;">05/18/2017</div>
<div class="t" style="left:369px;top:201px;">Duration</div>
<div class="fld" style="left:458px;top:199px;width:85px;height:24px;">1d</div>
<div class="t" style="left:588px;top:131px;">Conv. Date</div>
<div class="fld" style="left:655px;top:126px;width:89px;height:24px;"></div>
<div class="cb" style="left:589px;top:160px"></div>
<svg class="a" style="left:589px;top:160px" width="12" height="12"><path d="M2.5 6.5L4.2 10L10 3.5" stroke="#111" stroke-width="2.1" fill="none" stroke-linejoin="bevel"/></svg>
<div class="t" style="left:606px;top:160px;font-size:12.5px">Show Suggestions</div>
<div class="cb" style="left:589px;top:180px"></div>
<div class="t" style="left:606px;top:180px;font-size:12px">Event Pricing</div>
<div class="cb" style="left:589px;top:200px;opacity:.55"></div>
<svg class="a" style="left:589px;top:200px" width="12" height="12"><path d="M2.5 6.5L4.2 10L10 3.5" stroke="#9cc0e8" stroke-width="2" fill="none" stroke-linejoin="bevel"/></svg>
<div class="t" style="left:606px;top:200px;color:#a3a3a3;font-size:12px">Day-Week-Month Pricing</div>
<div class="t" style="left:362px;top:242px;">Customer</div>
<div class="fld" style="left:421px;top:236px;width:160px;height:24px;">SONY</div>
<svg class="a" style="left:561px;top:236px" width="17" height="17" viewBox="0 0 17 17"><defs><radialGradient id="mg6" cx="0.4" cy="0.35" r="0.7"><stop offset="0" stop-color="#ffffff"/><stop offset="0.6" stop-color="#bfe6fb"/><stop offset="1" stop-color="#8fc7ea"/></radialGradient></defs><line x1="9.5" y1="9.5" x2="15" y2="15" stroke="#55526e" stroke-width="4" stroke-linecap="round"/><line x1="10" y1="10" x2="14.7" y2="14.7" stroke="#f6a040" stroke-width="2.2" stroke-linecap="round"/><circle cx="6.5" cy="6.5" r="5.2" fill="url(#mg6)" stroke="#7a7ca8" stroke-width="1.2"/><path d="M2.2 8.5A5 5 0 0 0 8.5 10.8" stroke="#606088" stroke-width="0.8" fill="none"/></svg>
<div class="t" style="left:362px;top:270px;">Contact</div>
<div class="fld" style="left:421px;top:265px;width:160px;height:24px;">James S Briar</div>
<svg class="a" style="left:561px;top:265px" width="17" height="17" viewBox="0 0 17 17"><defs><radialGradient id="mg7" cx="0.4" cy="0.35" r="0.7"><stop offset="0" stop-color="#ffffff"/><stop offset="0.6" stop-color="#bfe6fb"/><stop offset="1" stop-color="#8fc7ea"/></radialGradient></defs><line x1="9.5" y1="9.5" x2="15" y2="15" stroke="#55526e" stroke-width="4" stroke-linecap="round"/><line x1="10" y1="10" x2="14.7" y2="14.7" stroke="#f6a040" stroke-width="2.2" stroke-linecap="round"/><circle cx="6.5" cy="6.5" r="5.2" fill="url(#mg7)" stroke="#7a7ca8" stroke-width="1.2"/><path d="M2.2 8.5A5 5 0 0 0 8.5 10.8" stroke="#606088" stroke-width="0.8" fill="none"/></svg>
<div class="t" style="left:362px;top:299px;">Contact Tel #</div>
<div class="fld" style="left:451px;top:294px;width:129px;height:24px;">2142312</div>
<div class="t" style="left:587px;top:242px;">Bill To</div>
<div class="fld" style="left:654px;top:236px;width:160px;height:24px;">SONY</div>
<svg class="a" style="left:794px;top:236px" width="17" height="17" viewBox="0 0 17 17"><defs><radialGradient id="mg8" cx="0.4" cy="0.35" r="0.7"><stop offset="0" stop-color="#ffffff"/><stop offset="0.6" stop-color="#bfe6fb"/><stop offset="1" stop-color="#8fc7ea"/></radialGradient></defs><line x1="9.5" y1="9.5" x2="15" y2="15" stroke="#55526e" stroke-width="4" stroke-linecap="round"/><line x1="10" y1="10" x2="14.7" y2="14.7" stroke="#f6a040" stroke-width="2.2" stroke-linecap="round"/><circle cx="6.5" cy="6.5" r="5.2" fill="url(#mg8)" stroke="#7a7ca8" stroke-width="1.2"/><path d="M2.2 8.5A5 5 0 0 0 8.5 10.8" stroke="#606088" stroke-width="0.8" fill="none"/></svg>
<div class="t" style="left:587px;top:270px;">Bill Contact</div>
<div class="fld" style="left:654px;top:265px;width:160px;height:24px;">James S Briar</div>
<svg class="a" style="left:794px;top:265px" width="17" height="17" viewBox="0 0 17 17"><defs><radialGradient id="mg9" cx="0.4" cy="0.35" r="0.7"><stop offset="0" stop-color="#ffffff"/><stop offset="0.6" stop-color="#bfe6fb"/><stop offset="1" stop-color="#8fc7ea"/></radialGradient></defs><line x1="9.5" y1="9.5" x2="15" y2="15" stroke="#55526e" stroke-width="4" stroke-linecap="round"/><line x1="10" y1="10" x2="14.7" y2="14.7" stroke="#f6a040" stroke-width="2.2" stroke-linecap="round"/><circle cx="6.5" cy="6.5" r="5.2" fill="url(#mg9)" stroke="#7a7ca8" stroke-width="1.2"/><path d="M2.2 8.5A5 5 0 0 0 8.5 10.8" stroke="#606088" stroke-width="0.8" fill="none"/></svg>
<div class="t" style="left:587px;top:299px;">Language</div>
<div class="fld" style="left:654px;top:294px;width:90px;height:24px;"></div>
<svg class="a" style="left:724px;top:294px" width="17" height="17" viewBox="0 0 17 17"><defs><radialGradient id="mg10" cx="0.4" cy="0.35" r="0.7"><stop offset="0" stop-color="#ffffff"/><stop offset="0.6" stop-color="#bfe6fb"/><stop offset="1" stop-color="#8fc7ea"/></radialGradient></defs><line x1="9.5" y1="9.5" x2="15" y2="15" stroke="#55526e" stroke-width="4" stroke-linecap="round"/><line x1="10" y1="10" x2="14.7" y2="14.7" stroke="#f6a040" stroke-width="2.2" stroke-linecap="round"/><circle cx="6.5" cy="6.5" r="5.2" fill="url(#mg10)" stroke="#7a7ca8" stroke-width="1.2"/><path d="M2.2 8.5A5 5 0 0 0 8.5 10.8" stroke="#606088" stroke-width="0.8" fill="none"/></svg>
<div class="a" style="left:752px;top:148px;width:290px;height:83px;border:1px solid #72849A;border-left-color:#5B87D5;border-top-color:#5B87D5;background:#C6DAF0"></div>
<svg class="a" style="left:754px;top:127px" width="211" height="21"><path d="M0.5 21V5.5L5.5 0.5H90.5V21" fill="#FA9A4A" stroke="#71849C"/><path d="M1.5 21V6L6 1.5H89.5" fill="none" stroke="#fde6d2" stroke-opacity="0.6"/><path d="M90.5 21V5.5L95.5 0.5H209.5V21" fill="#C44D2E" stroke="#5B87D5"/><path d="M91.5 21V6L96 1.5H208.5" fill="none" stroke="#fff"/></svg>
<div class="t" style="left:760px;top:131px;font-size:12.3px">Comments</div>
<div class="t" style="left:849px;top:131px;font-size:11.9px;color:#fff;font-weight:bold">LaborComments</div>
<div class="a" style="left:845px;top:148px;width:118px;height:1px;background:#C6DAF0"></div>
<div class="a" style="left:755px;top:151px;width:284px;height:77px;border:1px solid #b0b0b0;background:#fff"></div>
<div class="a" style="left:761px;top:154px;width:270px;height:69px;border:2px solid #6f7680;border-right-color:#9aa0a8;border-bottom-color:#8a9098;background:#fff"></div>
<svg class="a" style="left:1009px;top:154px" width="17" height="17" viewBox="0 0 17 17"><defs><radialGradient id="mg11" cx="0.4" cy="0.35" r="0.7"><stop offset="0" stop-color="#ffffff"/><stop offset="0.6" stop-color="#bfe6fb"/><stop offset="1" stop-color="#8fc7ea"/></radialGradient></defs><line x1="9.5" y1="9.5" x2="15" y2="15" stroke="#55526e" stroke-width="4" stroke-linecap="round"/><line x1="10" y1="10" x2="14.7" y2="14.7" stroke="#f6a040" stroke-width="2.2" stroke-linecap="round"/><circle cx="6.5" cy="6.5" r="5.2" fill="url(#mg11)" stroke="#7a7ca8" stroke-width="1.2"/><path d="M2.2 8.5A5 5 0 0 0 8.5 10.8" stroke="#606088" stroke-width="0.8" fill="none"/></svg>
<div class="t" style="left:826px;top:248px;">Document Folder:</div>
<div class="a" style="left:1014px;top:240px;width:29px;height:23px;border:1px solid #b4b4b4;background:#fff"></div>
<div class="a" style="left:1016px;top:242px;width:27px;height:1px;background:#858585"></div>
<div class="a" style="left:1016px;top:261px;width:27px;height:1px;background:#858585"></div>
<svg class="a" style="left:1014px;top:240px" width="29" height="23"><text x="2.2" y="16.3" font-family="Liberation Sans" font-size="10.3" fill="#000" stroke="#000" stroke-width="0.2" textLength="25.8" lengthAdjust="spacingAndGlyphs">Reset</text></svg>
<div class="a" style="left:826px;top:265px;width:216px;height:48px;border:2px solid #6f7680;border-right-color:#9aa0a8;border-bottom-color:#8a9098;background:#fff"></div>
<div class="a" style="left:8px;top:356px;width:1069px;height:315px;border:1px solid #72849A;border-left-color:#5B87D5;border-top-color:#5B87D5;background:#C6DAF0"></div>
<div class="a" style="left:9px;top:357px;width:1066px;height:1px;background:#fff"></div>
<div class="a" style="left:11px;top:360px;width:1062px;height:307px;border:1px solid #ADADAD;background:#fff"></div>
<svg class="a" style="left:10px;top:334px" width="126" height="22"><path d="M0.5 22V5.5L5.5 0.5H66.5V22" fill="#FA9A4A" stroke="#71849C"/><path d="M1.5 22V6L6 1.5H65.5" fill="none" stroke="#fde6d2" stroke-opacity="0.6"/><path d="M67.5 22V5.5L72.5 0.5H124.5V22" fill="#C44D2E" stroke="#5B87D5"/><path d="M68.5 22V6L73 1.5H123.5" fill="none" stroke="#fff"/></svg>
<div class="t" style="left:16px;top:339px;font-size:12.3px">Item(s)</div>
<div class="t" style="left:82px;top:339px;font-size:11.9px;color:#fff;font-weight:bold">Labor</div>
<div class="a" style="left:78px;top:356px;width:56px;height:2px;background:#C6DAF0"></div>
<div class="a" style="left:12px;top:362px;width:1059px;height:303px;border:1px solid #6F8090;background:#fff"></div>
<div class="a" style="left:13px;top:363px;width:1057px;height:19px;background:#F2743F"></div>
<div class="a" style="left:13px;top:363px;width:14px;height:19px;border:1px solid #8A3A22"></div>
<div class="th" style="left:14px;width:12px;top:364px;height:17px;padding-top:1px">T</div>
<div class="a" style="left:27px;top:363px;width:15px;height:19px;border:1px solid #8A3A22"></div>
<div class="th" style="left:28px;width:13px;top:364px;height:17px;padding-top:1px">C</div>
<div class="a" style="left:42px;top:363px;width:15px;height:19px;border:1px solid #8A3A22"></div>
<div class="th" style="left:43px;width:13px;top:364px;height:17px;padding-top:1px">L</div>
<div class="a" style="left:57px;top:363px;width:60px;height:19px;border:1px solid #8A3A22"></div>
<div class="th" style="left:58px;width:58px;top:364px;height:17px;padding-top:1px">Action</div>
<div class="a" style="left:117px;top:363px;width:80px;height:19px;border:1px solid #8A3A22"></div>
<div class="th" style="left:118px;width:78px;top:364px;height:17px;padding-top:1px">Labor Id</div>
<div class="a" style="left:197px;top:363px;width:261px;height:19px;border:1px solid #8A3A22"></div>
<div class="th" style="left:198px;width:259px;top:364px;height:17px;padding-top:1px">Description</div>
<div class="a" style="left:458px;top:363px;width:49px;height:19px;border:1px solid #8A3A22"></div>
<div class="th" style="left:459px;width:47px;top:364px;height:17px;padding-top:1px">Qty</div>
<div class="a" style="left:507px;top:363px;width:143px;height:19px;border:1px solid #8A3A22"></div>
<div class="th" style="left:508px;width:141px;top:364px;height:17px;padding-top:1px">Tasks</div>
<div class="a" style="left:650px;top:363px;width:120px;height:19px;border:1px solid #8A3A22"></div>
<div class="th" style="left:651px;width:118px;top:364px;height:17px;padding-top:1px">Site Regular Rate</div>
<div class="a" style="left:770px;top:363px;width:79px;height:19px;border:1px solid #8A3A22"></div>
<div class="th" style="left:771px;width:77px;top:364px;height:17px;padding-top:1px">Regular Rate</div>
<div class="a" style="left:849px;top:363px;width:80px;height:19px;border:1px solid #8A3A22"></div>
<div class="th" style="left:850px;width:78px;top:364px;height:17px;padding-top:1px">Site OT Rate</div>
<div class="a" style="left:929px;top:363px;width:60px;height:19px;border:1px solid #8A3A22"></div>
<div class="th" style="left:930px;width:58px;top:364px;height:17px;padding-top:1px">OT Rate</div>
<div class="a" style="left:989px;top:363px;width:81px;height:19px;border:1px solid #8A3A22"></div>
<div class="th" style="left:990px;width:79px;top:364px;height:17px;padding-top:1px">Site DT Rate</div>
<div class="a" style="left:13px;top:382px;width:1057px;height:1px;background:#F8803E"></div>
<div class="a" style="left:13px;top:383px;width:1057px;height:19px;background:#FA9A4A;border-bottom:1px solid #C08040"></div>
<div class="td" style="left:13px;top:383px;height:18px;width:14px;line-height:14px;padding-top:3px;"></div>
<div class="td" style="left:27px;top:383px;height:18px;width:15px;line-height:14px;padding-top:3px;"></div>
<div class="td" style="left:42px;top:383px;height:18px;width:15px;line-height:14px;padding-top:3px;"></div>
<div class="td" style="left:57px;top:383px;height:18px;width:60px;line-height:14px;padding-top:3px;padding-left:3px">Rent</div>
<div class="td" style="left:117px;top:383px;height:18px;width:80px;line-height:14px;padding-top:3px;padding-left:2px">AUDIOASSI...</div>
<div class="td" style="left:197px;top:383px;height:18px;width:261px;line-height:14px;padding-top:3px;padding-left:2px">AUDIO ASSISTANT</div>
<div class="td" style="left:458px;top:383px;height:18px;width:49px;line-height:14px;padding-top:3px;text-align:right;padding-right:1px">1</div>
<div class="td" style="left:507px;top:383px;height:18px;width:143px;line-height:14px;padding-top:3px;"></div>
<div class="td" style="left:650px;top:383px;height:18px;width:120px;line-height:14px;padding-top:3px;text-align:right;padding-right:1px">100.00</div>
<div class="td" style="left:770px;top:383px;height:18px;width:79px;line-height:14px;padding-top:3px;text-align:right;padding-right:1px">100.00</div>
<div class="td" style="left:849px;top:383px;height:18px;width:80px;line-height:14px;padding-top:3px;"></div>
<div class="td" style="left:929px;top:383px;height:18px;width:60px;line-height:14px;padding-top:3px;"></div>
<div class="td" style="left:989px;top:383px;height:18px;width:81px;line-height:14px;padding-top:3px;"></div>
<div class="a" style="left:118px;top:383px;width:80px;height:18px;border:1px solid #f00"></div>
<div class="a" style="left:14px;top:386px;width:13px;height:13px;background:#fff"></div>
<div class="cb" style="left:15px;top:386px;width:11px;height:12px;border:1px solid #6a8098;background:linear-gradient(135deg,#fde2cc 0%,#f6b27e 50%,#ee8a40 100%)"></div>
<div class="a" style="left:28px;top:386px;width:13px;height:13px;background:#fff"></div>
<div class="cb" style="left:29px;top:386px;width:11px;height:12px;border:1px solid #6a8098;background:linear-gradient(135deg,#fde2cc 0%,#f6b27e 50%,#ee8a40 100%)"></div>
<div class="a" style="left:43px;top:386px;width:13px;height:13px;background:#fff"></div>
<div class="cb" style="left:44px;top:386px;width:11px;height:12px;border:1px solid #6a8098;background:linear-gradient(135deg,#fde2cc 0%,#f6b27e 50%,#ee8a40 100%)"></div>
<svg class="a" style="left:15px;top:387px" width="11" height="11"><path d="M2.5 5.5L3.8 9L9.5 3" stroke="#1a1a1a" stroke-width="2" fill="none" stroke-linejoin="bevel"/></svg>
<div class="a" style="left:13px;top:647px;width:1057px;height:16px;background:#eeeeee;border-top:1px solid #72849A;border-bottom:1px solid #72849A"></div>
<div class="a" style="left:13px;top:648px;width:15px;height:14px;background:#eeeeee"></div>
<div class="a" style="left:1053px;top:648px;width:16px;height:14px;border-left:1px solid #72849A;border-right:1px solid #72849A;background:#eeeeee"></div>
<svg class="a" style="left:18px;top:652px" width="5" height="9"><path d="M5 0V8L0 4Z" fill="#222"/></svg>
<svg class="a" style="left:1060px;top:652px" width="5" height="9"><path d="M0 0V8L5 4Z" fill="#222"/></svg>
<div class="a" style="left:28px;top:647px;width:588px;height:16px;border:1px solid #FFC000;background:linear-gradient(#f2c39d,#e9a36f)"></div>
<div class="a" style="left:319px;top:651px;width:1px;height:9px;background:#7a6a80;box-shadow:1px 0 0 #fce0c8"></div>
<div class="a" style="left:321px;top:651px;width:1px;height:9px;background:#7a6a80;box-shadow:1px 0 0 #fce0c8"></div>
<div class="a" style="left:323px;top:651px;width:1px;height:9px;background:#7a6a80;box-shadow:1px 0 0 #fce0c8"></div>
<div class="t" style="left:70px;top:679px;font-weight:bold;font-size:14px;color:#1e1e1e">Items</div>
<div class="fld" style="left:120px;top:673px;width:100px;height:24px;font-weight:bold;font-size:14px;padding-top:4px;color:#1e1e1e">$</div>
<div class="t" style="left:235px;top:679px;font-weight:bold;font-size:14px;color:#1e1e1e">Labor</div>
<div class="fld" style="left:287px;top:673px;width:100px;height:24px;font-weight:bold;font-size:14px;padding-top:4px;color:#1e1e1e">$ 100.00</div>
<div class="t" style="left:446px;top:679px;font-weight:bold;font-size:14px;color:#1e1e1e">Sub Total</div>
<div class="fld" style="left:525px;top:673px;width:100px;height:24px;font-weight:bold;font-size:14px;padding-top:4px;color:#1e1e1e">$ 100.00</div>
<div class="t" style="left:636px;top:679px;font-weight:bold;font-size:14px;color:#1e1e1e">Tax</div>
<div class="fld" style="left:670px;top:673px;width:100px;height:24px;font-weight:bold;font-size:14px;padding-top:4px;color:#1e1e1e">$</div>
<div class="a" style="left:813px;top:673px;width:89px;height:23px;border:1px solid #a0a0a0;background:#fff;font-weight:bold;font-size:14px;text-align:center;line-height:14px;padding-top:5px;color:#1e1e1e">Total</div>
<div class="fld" style="left:906px;top:673px;width:100px;height:24px;font-weight:bold;font-size:14px;padding-top:4px;color:#1e1e1e">$ 100.00</div>
<div class="a" style="left:8px;top:707px;width:1069px;height:1px;background:#c8c8c8"></div>
<div class="a" style="left:8px;top:708px;width:1069px;height:1px;background:#7c7c7c"></div>
<div class="a" style="left:9px;top:709px;width:1067px;height:22px;border-left:1px solid #7c7c7c;border-right:1px solid #c0c0c0;border-bottom:1px solid #c0c0c0;background:#fff"></div>
<div class="a" style="left:8px;top:709px;width:1px;height:22px;background:#c8d0d8"></div>
</body></html>
